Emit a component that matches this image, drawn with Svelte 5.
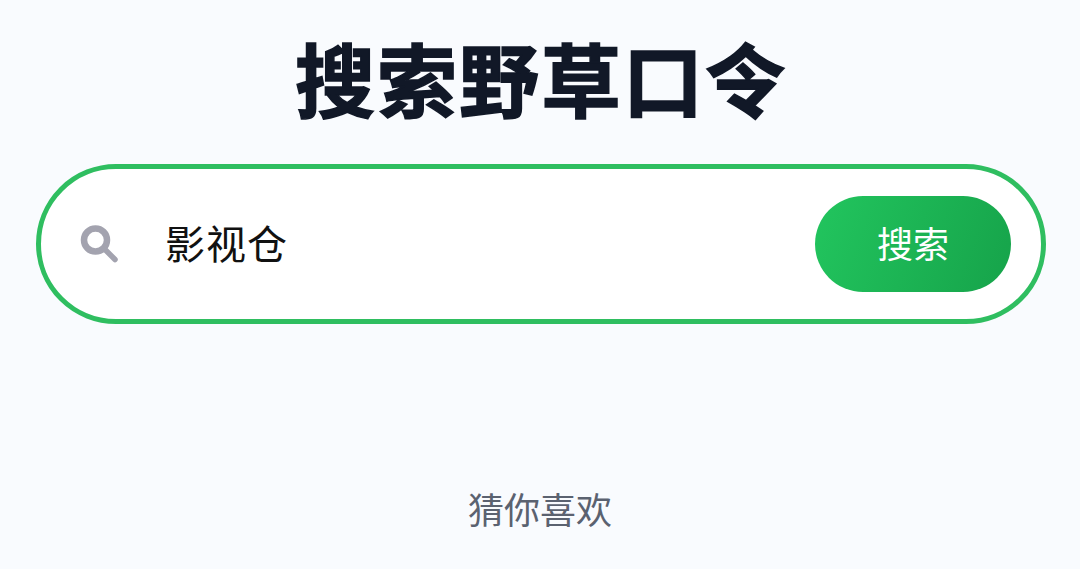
<script>
  let query = $state('影视仓');
</script>

<main class="page">
  <h1 class="title">搜索野草口令</h1>
  <form class="search" onsubmit={(e) => e.preventDefault()}>
    <svg class="icon" viewBox="0 0 38 38" aria-hidden="true">
      <circle cx="15.5" cy="15" r="11.5" fill="none" stroke="#a3a3af" stroke-width="6.5" />
      <path d="M24.5 24 L35 34.5" stroke="#a3a3af" stroke-width="5.5" stroke-linecap="round" />
    </svg>
    <input class="field" bind:value={query} />
    <button class="submit" type="submit">搜索</button>
  </form>
  <h2 class="sub">猜你喜欢</h2>
</main>

<style>
  :global(body) {
    margin: 0;
    background: #f9fbfe;
  }
  .page {
    box-sizing: border-box;
    height: 569px;
    overflow: hidden;
    padding: 32px 34px 0 36px;
    display: flex;
    flex-direction: column;
    align-items: stretch;
    font-family: "Noto Sans CJK SC", "Noto Sans", sans-serif;
  }
  .title {
    margin: 0;
    text-align: center;
    font-size: 80px;
    line-height: 88px;
    font-weight: 700;
    letter-spacing: 2px;
    -webkit-text-stroke: 1.5px #111827;
    color: #111827;
  }
  .search {
    box-sizing: border-box;
    margin-top: 44px;
    height: 160px;
    border: 5px solid #2fbe60;
    border-radius: 80px;
    background: #fff;
    display: flex;
    align-items: center;
    padding: 0 30px 0 39px;
  }
  .icon {
    width: 38px;
    height: 38px;
    flex: none;
  }
  .field {
    flex: 1;
    min-width: 0;
    margin-left: 47px;
    border: 0;
    outline: 0;
    background: none;
    font: inherit;
    font-size: 40px;
    font-weight: 400;
    letter-spacing: 1px;
    color: #111;
    padding: 0 0 4px;
  }
  .submit {
    width: 196px;
    height: 96px;
    border: 0;
    border-radius: 48px;
    background: linear-gradient(110deg, #22c55e, #16a34a);
    color: #fff;
    font: inherit;
    font-size: 36px;
    font-weight: 400;
    padding: 0 0 5px;
  }
  .sub {
    margin: 158px 2px 0 0;
    text-align: center;
    font-size: 36px;
    line-height: 52px;
    font-weight: 400;
    color: #5b6270;
  }
</style>
